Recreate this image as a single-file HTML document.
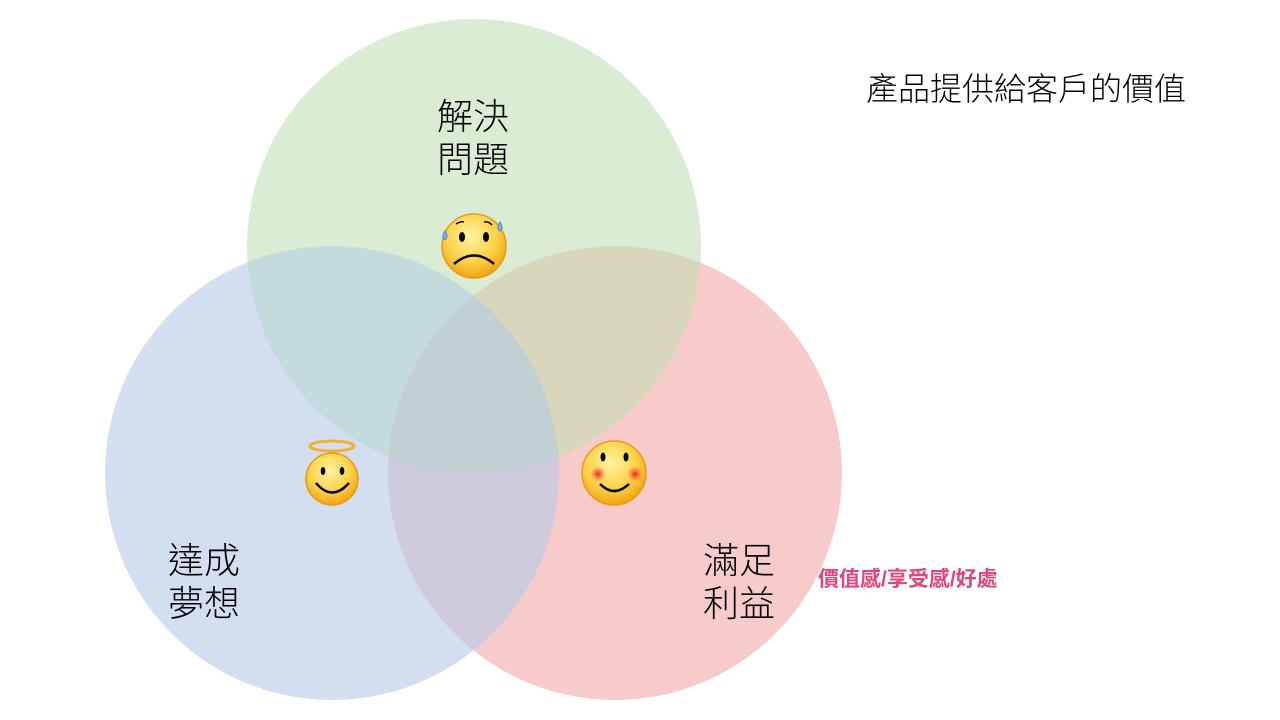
<!DOCTYPE html>
<html><head><meta charset="utf-8"><style>
body{margin:0;width:1280px;height:720px;background:#fff;overflow:hidden;position:relative;font-family:"Liberation Sans","Noto Sans CJK TC",sans-serif}
.t{position:absolute;font-size:36px;line-height:43px;color:#000;font-weight:300}
</style></head><body>
<svg width="1280" height="720" style="position:absolute;left:0;top:0">
<defs>
<clipPath id="g"><circle cx="474" cy="246" r="227"/></clipPath>
<clipPath id="b"><circle cx="332" cy="473" r="227"/></clipPath>
<radialGradient id="f" cx="45%" cy="35%" r="65%"><stop offset="0" stop-color="#fff3a0"/><stop offset="0.6" stop-color="#fcd24a"/><stop offset="1" stop-color="#f0a414"/></radialGradient>
<radialGradient id="ch"><stop offset="0" stop-color="#f02020"/><stop offset="1" stop-color="#f86040" stop-opacity="0"/></radialGradient>
</defs>
<circle cx="474" cy="246" r="227" fill="#dbecd4"/>
<circle cx="332" cy="473" r="227" fill="#d3dff1"/>
<circle cx="615" cy="473" r="227" fill="#f8cbcb"/>
<g clip-path="url(#g)"><circle cx="332" cy="473" r="227" fill="#c4dbdd"/><circle cx="615" cy="473" r="227" fill="#d8d6bb"/></g>
<g clip-path="url(#b)"><circle cx="615" cy="473" r="227" fill="#d0cadd"/></g>
<g clip-path="url(#g)"><g clip-path="url(#b)"><circle cx="615" cy="473" r="227" fill="#c2cfd3"/></g></g>
<circle cx="474" cy="246" r="32" fill="url(#f)" stroke="#e89a10" stroke-width="1.5"/>
<ellipse cx="462" cy="237" rx="3" ry="5"/><ellipse cx="486" cy="237" rx="3" ry="5"/>
<path d="M454 264 Q474 247 494 264" fill="none" stroke="#000" stroke-width="2.5"/>
<path d="M456 224 Q461 221 464 222 M484 222 Q488 221 492 225" fill="none" stroke="#000" stroke-width="1.5"/>
<path d="M445 231 q-4 6 0 9 q4 -3 0 -9z" fill="#7fb4e8" stroke="#4a88c8"/>
<path d="M500 222 q-4 6 0 9 q4 -3 0 -9z" fill="#7fb4e8" stroke="#4a88c8"/>
<circle cx="614" cy="473" r="32" fill="url(#f)" stroke="#e89a10" stroke-width="1.5"/>
<circle cx="598" cy="474" r="8" fill="url(#ch)"/><circle cx="635" cy="474" r="8" fill="url(#ch)"/>
<ellipse cx="603" cy="457" rx="2.5" ry="4.5"/><ellipse cx="626" cy="457" rx="2.5" ry="4.5"/>
<path d="M600 484 Q614 498 629 484" fill="none" stroke="#000" stroke-width="2.5"/>
<ellipse cx="332" cy="446" rx="22" ry="5" fill="none" stroke="#f0b030" stroke-width="3"/>
<circle cx="332" cy="479" r="26" fill="url(#f)" stroke="#e89a10" stroke-width="1.5"/>
<ellipse cx="323" cy="471" rx="2.3" ry="4"/><ellipse cx="342" cy="471" rx="2.3" ry="4"/>
<path d="M316 483 Q332 502 349 483" fill="none" stroke="#000" stroke-width="2.5"/>
</svg>
<div class="t" style="left:437px;top:95px">解決<br>問題</div>
<div class="t" style="left:168px;top:539px">達成<br>夢想</div>
<div class="t" style="left:703px;top:539px">滿足<br>利益</div>
<div style="position:absolute;left:866px;top:69px;font-size:32px;line-height:40px;font-weight:300">產品提供給客戶的價值</div>
<div style="position:absolute;left:818px;top:566px;font-size:21px;line-height:27px;font-weight:bold;color:#e0457b">價值感/享受感/好處</div>
</body></html>
